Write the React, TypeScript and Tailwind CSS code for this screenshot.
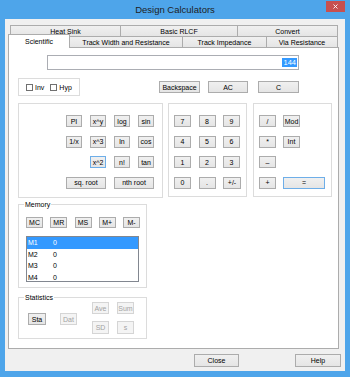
import React from 'react';

/**
 * Design Calculators – Scientific tab
 * Windows 8 style dialog, scaled down.
 */

type Variant = 'normal' | 'focus' | 'disabled';

function Btn({
  label,
  className = '',
  variant = 'normal',
}: {
  label: string;
  className?: string;
  variant?: Variant;
}) {
  const look =
    variant === 'disabled'
      ? 'border-[#d5d5d5] bg-[#f4f4f4] text-[#a3a3a3]'
      : variant === 'focus'
        ? 'border-[#6eaee8] bg-linear-to-b from-[#f0f0f0] to-[#e5e5e5] text-black'
        : 'border-[#acacac] bg-linear-to-b from-[#f0f0f0] to-[#e5e5e5] text-black';
  return (
    <div className={`flex items-center justify-center border text-[7px] leading-none whitespace-nowrap ${look} ${className}`}>
      {label}
    </div>
  );
}

function Tab({ label, className = '' }: { label: string; className?: string }) {
  return (
    <div
      className={`flex items-center justify-center border-t border-l border-[#acacac] bg-linear-to-b from-[#f0f0f0] to-[#e5e5e5] text-[7px] leading-none whitespace-nowrap ${className}`}
    >
      {label}
    </div>
  );
}

function GroupBox({
  label,
  className = '',
  children,
}: {
  label?: string;
  className?: string;
  children?: React.ReactNode;
}) {
  return (
    <div className={`relative border border-[#dcdcdc] ${className}`}>
      {label && (
        <span className="absolute -top-[5px] left-[5px] bg-white px-[1px] text-[7px] leading-[9px]">
          {label}
        </span>
      )}
      {children}
    </div>
  );
}

function CheckBox({ label }: { label: string }) {
  return (
    <div className="flex items-center gap-[2px]">
      <div className="w-[7px] h-[7px] border border-[#707070] bg-white" />
      <span className="text-[7px] leading-none">{label}</span>
    </div>
  );
}

const memory = [
  { name: 'M1', value: '0', selected: true },
  { name: 'M2', value: '0' },
  { name: 'M3', value: '0' },
  { name: 'M4', value: '0' },
];

export default function App() {
  return (
    <div className="w-[350px] h-[377px] bg-[#4ea5ea] flex flex-col font-['Liberation_Sans',Arial,sans-serif] text-black">
      {/* title bar */}
      <div className="h-[19px] grid grid-cols-[1fr_auto_1fr]">
        <div />
        <div className="text-[9.5px] leading-[19px] text-[#1e1e1e]">Design Calculators</div>
        <div className="flex justify-end items-start pr-[5px] pt-[1px]">
          <div className="w-[19px] h-[11px] bg-[#c75050] flex items-center justify-center">
            <svg viewBox="0 0 10 10" className="w-[5px] h-[5px]" stroke="white" strokeWidth="1.8">
              <path d="M1 1 9 9M9 1 1 9" />
            </svg>
          </div>
        </div>
      </div>

      {/* client area */}
      <div className="mx-[5px] h-[352px] bg-[#f0f0f0] flex flex-col">
        <div className="ml-[3px] mt-[6px] w-[331px]">
          {/* back row of tabs */}
          <div className="flex h-[11px] ml-[2px]">
            <Tab label="Heat Sink" className="w-[110px]" />
            <Tab label="Basic RLCF" className="w-[117px]" />
            <Tab label="Convert" className="w-[101px] border-r" />
          </div>
          {/* front row of tabs */}
          <div className="flex h-[11px] items-end">
            <div className="relative z-10 -mb-[1px] w-[62px] h-[14px] border-t border-l border-r border-[#acacac] bg-white flex items-center justify-center text-[7px] leading-none pb-[1px]">
              Scientific
            </div>
            <Tab label="Track Width and Resistance" className="w-[112px] h-[11px] border-l-0" />
            <Tab label="Track Impedance" className="w-[84px] h-[11px]" />
            <Tab label="Via Resistance" className="w-[72px] h-[11px] border-r" />
          </div>

          {/* tab page */}
          <div className="w-[331px] h-[302px] border border-[#acacac] bg-white flex flex-col">
            {/* display */}
            <div className="mt-[7px] ml-[38px] w-[252px] h-[15px] border border-[#abadb3] flex items-center justify-end pr-[1px]">
              <span className="bg-[#3399ff] text-white text-[7.5px] leading-[9px] px-[1px]">144</span>
            </div>

            {/* Inv / Hyp and edit buttons */}
            <div className="mt-[8px] ml-[9px] flex items-start">
              <GroupBox className="w-[62px] h-[18px] flex items-center pl-[7px] gap-[6px]">
                <CheckBox label="Inv" />
                <CheckBox label="Hyp" />
              </GroupBox>
              <Btn label="Backspace" className="ml-[79px] mt-[3px] w-[41px] h-[12px]" />
              <Btn label="AC" className="ml-[8px] mt-[3px] w-[40px] h-[12px]" />
              <Btn label="C" className="ml-[10px] mt-[3px] w-[41px] h-[12px]" />
            </div>

            {/* keypads */}
            <div className="mt-[7px] ml-[9px] flex items-start">
              <GroupBox className="w-[145px] h-[95px] pt-[11px] pl-[47px]">
                <div className="grid grid-cols-[16px_16px_16px_16px] auto-rows-[12px] gap-x-[8px] gap-y-[8.5px]">
                  <Btn label="PI" />
                  <Btn label="x^y" />
                  <Btn label="log" />
                  <Btn label="sin" />
                  <Btn label="1/x" />
                  <Btn label="x^3" />
                  <Btn label="ln" />
                  <Btn label="cos" />
                  <Btn label="x^2" variant="focus" className="col-start-2" />
                  <Btn label="n!" />
                  <Btn label="tan" />
                  <Btn label="sq. root" className="col-span-2" />
                  <Btn label="nth root" className="col-span-2" />
                </div>
              </GroupBox>

              <GroupBox className="ml-[5px] w-[79px] h-[94px] pt-[11px] pl-[5px]">
                <div className="grid grid-cols-[17px_17px_17px] auto-rows-[12px] gap-x-[7.5px] gap-y-[8.5px]">
                  <Btn label="7" />
                  <Btn label="8" />
                  <Btn label="9" />
                  <Btn label="4" />
                  <Btn label="5" />
                  <Btn label="6" />
                  <Btn label="1" />
                  <Btn label="2" />
                  <Btn label="3" />
                  <Btn label="0" />
                  <Btn label="." />
                  <Btn label="+/-" className="w-[18px]" />
                </div>
              </GroupBox>

              <GroupBox className="ml-[6px] w-[79px] h-[94px] pt-[11px] pl-[5px]">
                <div className="grid grid-cols-[17px_42px] auto-rows-[12px] gap-x-[7px] gap-y-[8.5px]">
                  <Btn label="/" />
                  <Btn label="Mod" className="w-[17px]" />
                  <Btn label="*" />
                  <Btn label="Int" className="w-[17px]" />
                  <Btn label="–" />
                  <div />
                  <Btn label="+" />
                  <Btn label="=" variant="focus" />
                </div>
              </GroupBox>
            </div>

            {/* memory */}
            <GroupBox label="Memory" className="mt-[6px] ml-[9px] w-[129px] h-[84px] pt-[12px] pl-[7px]">
              <div className="flex gap-[7.25px]">
                {['MC', 'MR', 'MS', 'M+', 'M-'].map((m) => (
                  <Btn key={m} label={m} className="w-[17px] h-[11px]" />
                ))}
              </div>
              <div className="mt-[8px] w-[113px] h-[46px] border border-[#828790] overflow-hidden">
                {memory.map((m) => (
                  <div
                    key={m.name}
                    className={`flex h-[11.5px] items-center text-[7px] leading-none ${m.selected ? 'bg-[#3399ff] text-white' : ''}`}
                  >
                    <span className="w-[26px] pl-[1px]">{m.name}</span>
                    <span>{m.value}</span>
                  </div>
                ))}
              </div>
            </GroupBox>

            {/* statistics */}
            <GroupBox label="Statistics" className="mt-[9px] ml-[9px] w-[129px] h-[42px] flex items-start pl-[9px]">
              <Btn label="Sta" className="mt-[15px] w-[18px] h-[12px]" />
              <Btn label="Dat" variant="disabled" className="mt-[15px] ml-[14px] w-[17px] h-[12px]" />
              <div className="mt-[4px] ml-[15px] grid grid-cols-[17px_17px] grid-rows-[12px_13px] gap-x-[8px] gap-y-[7px]">
                <Btn label="Ave" variant="disabled" />
                <Btn label="Sum" variant="disabled" />
                <Btn label="SD" variant="disabled" />
                <Btn label="s" variant="disabled" />
              </div>
            </GroupBox>
          </div>
        </div>

        {/* dialog buttons */}
        <div className="mt-[5px] flex">
          <Btn label="Close" className="ml-[189px] w-[45px] h-[13px]" />
          <Btn label="Help" className="ml-[56px] w-[46px] h-[13px]" />
        </div>
      </div>
    </div>
  );
}
